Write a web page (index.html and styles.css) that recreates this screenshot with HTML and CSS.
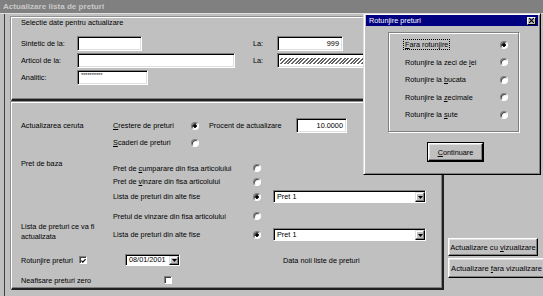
FILE: index.html
```html
<!DOCTYPE html>
<html lang="ro">
<head>
    <meta charset="UTF-8">
    <title>Actualizare lista de preturi</title>
    <link rel="stylesheet" href="styles.css">
</head>
<body>
<div class="window">
    <div class="titlebar">Actualizare lista de preturi</div>
    <div class="client">
        <div class="main">
            <div class="panel panel-top">
                <div class="caption">Selectie date pentru actualizare</div>
                <div class="fields">
                    <span>Sintetic de la:</span>
                    <span class="field f-sintetic"></span>
                    <span>La:</span>
                    <span class="field f-la1 right">999</span>

                    <span>Articol de la:</span>
                    <span class="field f-articol"></span>
                    <span>La:</span>
                    <span class="field f-la2"><span class="hatch"></span></span>

                    <span>Analitic:</span>
                    <span class="field f-analitic"><span class="stars">**********</span></span>
                </div>
            </div>

            <div class="panel panel-bottom">
                <div class="sec sec-a">
                    <div class="lbl lbl-a">Actualizarea ceruta</div>
                    <div class="opts">
                        <div class="row row-a1">
                            <span class="txt-a"><u>C</u>restere de preturi</span>
                            <span class="radio on"></span>
                            <span class="procent">Procent de actualizare</span>
                            <span class="field f-procent right">10.0000</span>
                        </div>
                        <div class="row row-a2">
                            <span class="txt-a"><u>S</u>caderi de preturi</span>
                            <span class="radio"></span>
                        </div>
                    </div>
                </div>

                <div class="sec sec-b">
                    <div class="lbl lbl-b">Pret de baza</div>
                    <div class="opts">
                        <div class="row row-b1">
                            <span class="txt-b">Pret de <u>c</u>umparare din fisa articolului</span>
                            <span class="radio"></span>
                        </div>
                        <div class="row row-b2">
                            <span class="txt-b">Pret de <u>v</u>inzare din fisa articolului</span>
                            <span class="radio"></span>
                        </div>
                        <div class="row row-b3">
                            <span class="txt-b">Lista de preturi din alte fise</span>
                            <span class="radio on"></span>
                            <span class="combo c-pret">
                                <span class="combo-text">Pret 1</span>
                                <span class="combo-arrow"><svg width="5" height="3" viewBox="0 0 5 3"><path d="M0 0H5L2.5 3Z" fill="#000"/></svg></span>
                            </span>
                        </div>
                    </div>
                </div>

                <div class="sec sec-c">
                    <div class="lbl lbl-c">Lista de preturi ce va fi<br>actualizata</div>
                    <div class="opts">
                        <div class="row row-b4">
                            <span class="txt-b">Pretul de vinzare din fisa articolului</span>
                            <span class="radio"></span>
                        </div>
                        <div class="row row-b5">
                            <span class="txt-b">Lista de preturi din alte fise</span>
                            <span class="radio on"></span>
                            <span class="combo c-pret">
                                <span class="combo-text">Pret 1</span>
                                <span class="combo-arrow"><svg width="5" height="3" viewBox="0 0 5 3"><path d="M0 0H5L2.5 3Z" fill="#000"/></svg></span>
                            </span>
                        </div>
                    </div>
                </div>

                <div class="row row-c1">
                    <span class="lbl-rot">Rotunjire preturi</span>
                    <span class="check on"><svg width="6" height="6" viewBox="0 0 6 6"><path d="M0.5 2.5L2.2 4.3L5.5 0.8" fill="none" stroke="#000" stroke-width="1.4"/></svg></span>
                    <span class="combo c-date">
                        <span class="combo-text">08/01/2001</span>
                        <span class="combo-arrow"><svg width="5" height="3" viewBox="0 0 5 3"><path d="M0 0H5L2.5 3Z" fill="#000"/></svg></span>
                    </span>
                    <span class="data-noua">Data noii liste de preturi</span>
                </div>

                <div class="row row-c2">
                    <span class="lbl-zero">Neafisare preturi zero</span>
                    <span class="check"></span>
                </div>
            </div>
        </div>

        <div class="side">
            <button class="btn btn-cu"><span>Actualizare cu <u>v</u>izualizare</span></button>
            <button class="btn btn-fara"><span>Actualizare <u>f</u>ara vizualizare</span></button>
        </div>
    </div>
</div>

<div class="dialog">
    <div class="dlg-title">
        <span>Rotunjire preturi</span>
        <span class="close"><svg width="5" height="5" viewBox="0 0 5 5"><path d="M0 0L5 5M5 0L0 5" stroke="#000" stroke-width="1.2"/></svg></span>
    </div>
    <div class="group">
        <div class="opt-row"><span class="opt-txt"><span class="focus"><u>F</u>ara rotunjire</span></span><span class="radio on"></span></div>
        <div class="opt-row"><span class="opt-txt">Rotunjire la zeci de <u>l</u>ei</span><span class="radio"></span></div>
        <div class="opt-row"><span class="opt-txt">Rotunjire la <u>b</u>ucata</span><span class="radio"></span></div>
        <div class="opt-row"><span class="opt-txt">Rotunjire la <u>z</u>ecimale</span><span class="radio"></span></div>
        <div class="opt-row"><span class="opt-txt">Rotunjire la <u>s</u>ute</span><span class="radio"></span></div>
    </div>
    <button class="btn btn-continuare"><span><u>C</u>ontinuare</span></button>
</div>
</body>
</html>
```

FILE: styles.css
```css
body {
    margin: 0;
    width: 543px;
    height: 296px;
    overflow: hidden;
    position: relative;
    background: #c0c0c0;
    font-family: "Liberation Sans", Arial, sans-serif;
    font-size: 7.3px;
    color: #000;
}
.window {
    display: flex;
    flex-direction: column;
    height: 296px;
}
.titlebar {
    height: 13px;
    line-height: 13px;
    padding-left: 3px;
    background: #808080;
    color: #c8c8c8;
    font-weight: bold;
    font-size: 8.1px;
    border-bottom: 1px solid #dfdfdf;
}
.client {
    flex: 1;
    display: flex;
    margin-left: 4px;
    padding: 3px 0 0 6px;
    border-left: 1px solid #404040;
}
.main {
    width: 433px;
    display: flex;
    flex-direction: column;
    gap: 1px;
}
.panel {
    box-sizing: border-box;
    border-style: solid;
    border-width: 1px 2px 2px 1px;
    border-color: #fff #202020 #202020 #fff;
    box-shadow: inset -1px -1px 0 #808080, -1px -1px 0 #909090;
    padding-left: 9px;
}
.panel-top {
    height: 84px;
}
.panel-bottom {
    height: 188px;
}
.caption {
    line-height: 10px;
}
.fields {
    display: grid;
    grid-template-columns: 56px 176px 24px 1fr;
    grid-auto-rows: 15px;
    row-gap: 2px;
    margin-top: 8px;
    align-items: center;
    justify-items: start;
}

/* sunken controls */
.field {
    box-sizing: border-box;
    height: 15px;
    line-height: 13px;
    padding: 0 3px;
    background: #fff;
    border: 1px solid;
    border-color: #808080 #fff #fff #808080;
    box-shadow: inset 1px 1px 0 #000, inset -1px -1px 0 #dfdfdf;
    overflow: hidden;
}
.right {
    text-align: right;
}
.f-sintetic { width: 65px; }
.f-articol { width: 158px; }
.f-analitic { width: 71px; }
.f-la1 { width: 66px; }
.f-la2 {
    width: 170px;
    display: flex;
    align-items: center;
    padding: 0 0 0 2px;
}
.hatch {
    flex: 1;
    height: 6px;
    background: repeating-linear-gradient(135deg, #fff 0 1.2px, #666 1.2px 2.6px);
}
.stars {
    font-size: 6px;
    line-height: 8px;
    display: block;
    letter-spacing: -0.2px;
    color: #222;
}
.f-procent {
    width: 51px;
}

/* bottom panel */
.sec {
    display: flex;
}
.lbl {
    width: 92px;
    flex: none;
}
.opts {
    display: flex;
    flex-direction: column;
}
.row {
    display: flex;
    align-items: center;
}
.sec-a { margin-top: 15px; }
.lbl-a { line-height: 15px; }
.row-a1 { height: 15px; }
.row-a2 { height: 15px; margin-top: 2px; }
.txt-a { width: 78px; }
.procent {
    width: 87px;
    margin-left: 10px;
}

.sec-b { margin-top: 11px; }
.lbl-b { line-height: 10px; margin-top: -2px; }
.row-b1 { height: 14px; }
.row-b2 { height: 13px; }
.row-b3 { height: 13px; margin-top: 2px; }
.txt-b { width: 140px; }

.sec-c { margin-top: 6px; }
.lbl-c { line-height: 10px; margin-top: 13px; }
.row-b4 { height: 14px; }
.row-b5 { height: 13px; margin-top: 5px; }

.row-c1 { height: 12px; margin-top: 12px; }
.lbl-rot { width: 58px; }
.row-c2 { height: 12px; margin-top: 8px; }
.lbl-zero { width: 143px; }
.data-noua { margin-left: 103px; }

.radio {
    box-sizing: border-box;
    flex: none;
    width: 8px;
    height: 8px;
    border-radius: 50%;
    background: #fff;
    border: 1px solid;
    border-color: #808080 #fff #fff #808080;
    box-shadow: inset 1px 1px 0 #404040;
}
.radio.on {
    background: radial-gradient(circle, #000 0 1.5px, #fff 2px);
}
.check {
    box-sizing: border-box;
    flex: none;
    width: 8px;
    height: 8px;
    background: #fff;
    border: 1px solid;
    border-color: #808080 #fff #fff #808080;
    box-shadow: inset 1px 1px 0 #404040;
    display: flex;
    align-items: center;
    justify-content: center;
}
.check svg {
    margin: 1px 0 0 1px;
}

.combo {
    box-sizing: border-box;
    display: flex;
    background: #fff;
    border: 1px solid;
    border-color: #808080 #fff #fff #808080;
    box-shadow: inset 1px 1px 0 #000;
}
.c-pret {
    width: 153px;
    height: 13px;
    margin-left: 12px;
}
.c-date {
    width: 55px;
    height: 12px;
    margin-left: 38px;
}
.combo-text {
    flex: 1;
    padding-left: 3px;
    line-height: 11px;
    white-space: nowrap;
}
.c-date .combo-text {
    line-height: 10px;
}
.combo-arrow {
    box-sizing: border-box;
    width: 10px;
    margin: 1px 0 0 0;
    background: #c0c0c0;
    border: 1px solid;
    border-color: #dfdfdf #000 #000 #dfdfdf;
    box-shadow: inset -1px -1px 0 #808080, inset 1px 1px 0 #fff;
    display: flex;
    align-items: center;
    justify-content: center;
}

/* buttons */
.side {
    flex: 1;
    display: flex;
    flex-direction: column;
    justify-content: flex-end;
    align-items: flex-start;
    gap: 2px;
    padding: 0 0 18px 4px;
    overflow: hidden;
}
.btn {
    box-sizing: border-box;
    flex: none;
    display: flex;
    align-items: center;
    justify-content: center;
    padding: 0;
    background: #c0c0c0;
    font-family: inherit;
    font-size: 7.6px;
    color: #000;
    white-space: nowrap;
    overflow: hidden;
    border: 1px solid;
    border-color: #fff #000 #000 #fff;
    box-shadow: inset -1px -1px 0 #808080, inset 1px 1px 0 #dfdfdf;
}
.btn-cu {
    width: 90px;
    height: 18px;
}
.btn-fara {
    width: 97px;
    height: 20px;
}

/* dialog window */
.dialog {
    position: absolute;
    left: 363px;
    top: 13px;
    width: 178px;
    height: 162px;
    box-sizing: border-box;
    padding: 1px 2px 2px;
    background: #c0c0c0;
    border: 1px solid;
    border-color: #dfdfdf #000 #000 #dfdfdf;
    box-shadow: inset 1px 1px 0 #fff, inset -1px -1px 0 #808080;
}
.dlg-title {
    height: 11px;
    padding: 0 2px 0 3px;
    display: flex;
    align-items: center;
    justify-content: space-between;
    background: #000080;
    color: #fff;
}
.close {
    box-sizing: border-box;
    width: 9px;
    height: 8px;
    background: #c0c0c0;
    border: 1px solid;
    border-color: #fff #000 #000 #fff;
    display: flex;
    align-items: center;
    justify-content: center;
}
.group {
    box-sizing: border-box;
    width: 131px;
    height: 100px;
    margin: 6px 0 0 22px;
    padding: 3px 0 0 16px;
    border: 1px solid #808080;
    box-shadow: inset 1px 1px 0 #fff, 1px 1px 0 #fff;
}
.opt-row {
    height: 17.5px;
    display: flex;
    align-items: center;
}
.opt-txt {
    width: 95px;
}
.focus {
    outline: 1px dotted #000;
    padding: 0 1px;
    margin-left: -1px;
}
.btn-continuare {
    width: 55px;
    height: 18px;
    margin: 11px 0 0 62px;
    outline: 1px solid #000;
    font-size: 7.3px;
}
```
